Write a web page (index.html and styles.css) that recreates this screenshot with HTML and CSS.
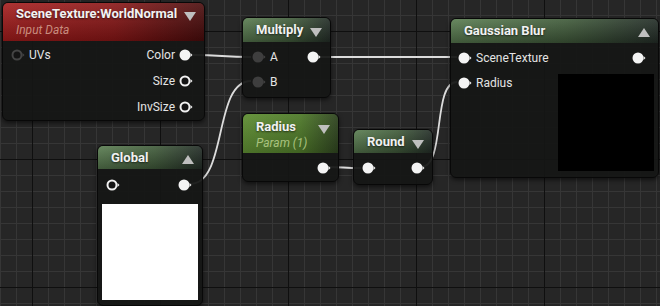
FILE: index.html
```html
<!DOCTYPE html>
<html>
<head>
  <title>Material Graph</title>
  <link rel="stylesheet" href="styles.css">
</head>
<body>
  <div class="graph">

    <!-- wires sit under the nodes -->
    <svg class="wires" width="660" height="306" viewBox="0 0 660 306">
      <path d="M193,55 C222,55 222,57 251,57" />
      <path d="M320,57 L457,57" />
      <path d="M190,184 C228,184 213,81 251,81" />
      <path d="M326,167 C343,167 343,168 361,168" />
      <path d="M421,167 C446,167 432,82 457,82" />
    </svg>

    <!-- SceneTexture -->
    <div class="node node--scene">
      <div class="node__head head--red">
        <div>
          <div class="node__title">SceneTexture:WorldNormal</div>
          <div class="node__sub sub--red">Input Data</div>
        </div>
        <span class="tri tri--down"></span>
      </div>
      <div class="node__body">
        <div class="row">
          <span class="pin"><svg width="14" height="12"><circle cx="6" cy="6" r="4.5" class="ring-dark"/><path d="M11.5,4 L13.5,6 L11.5,8 Z" class="tip-dark"/></svg>UVs</span>
          <span class="pin">Color<svg width="14" height="12"><circle cx="6" cy="6" r="5.5" class="fill"/><path d="M11.5,4 L13.5,6 L11.5,8 Z" class="tip"/></svg></span>
        </div>
        <div class="row row--end">
          <span class="pin">Size<svg width="14" height="12"><circle cx="6" cy="6" r="4.5" class="ring"/><path d="M11.5,4 L13.5,6 L11.5,8 Z" class="tip"/></svg></span>
        </div>
        <div class="row row--end">
          <span class="pin">InvSize<svg width="14" height="12"><circle cx="6" cy="6" r="4.5" class="ring"/><path d="M11.5,4 L13.5,6 L11.5,8 Z" class="tip"/></svg></span>
        </div>
      </div>
    </div>

    <!-- Multiply -->
    <div class="node node--multiply">
      <div class="node__head head--green">
        <div class="node__title">Multiply</div>
        <span class="tri tri--down"></span>
      </div>
      <div class="node__body body--small">
        <div class="row row--mid">
          <span class="pin"><svg width="14" height="12"><circle cx="6" cy="6" r="5.5" class="fill-dark"/><path d="M11.5,4 L13.5,6 L11.5,8 Z" class="tip-dark"/></svg>A</span>
          <span class="pin"><svg width="14" height="12"><circle cx="6" cy="6" r="5.5" class="fill"/><path d="M11.5,4 L13.5,6 L11.5,8 Z" class="tip"/></svg></span>
        </div>
        <div class="row row--mid">
          <span class="pin"><svg width="14" height="12"><circle cx="6" cy="6" r="5.5" class="fill-dark"/><path d="M11.5,4 L13.5,6 L11.5,8 Z" class="tip-dark"/></svg>B</span>
        </div>
      </div>
    </div>

    <!-- Gaussian Blur -->
    <div class="node node--blur">
      <div class="node__head head--green">
        <div class="node__title">Gaussian Blur</div>
        <span class="tri tri--up"></span>
      </div>
      <div class="blur__body">
        <div class="blur__inputs">
          <div class="row row--mid">
            <span class="pin"><svg width="14" height="12"><circle cx="6" cy="6" r="5.5" class="fill"/><path d="M11.5,4 L13.5,6 L11.5,8 Z" class="tip"/></svg>SceneTexture</span>
          </div>
          <div class="row row--mid">
            <span class="pin"><svg width="14" height="12"><circle cx="6" cy="6" r="5.5" class="fill"/><path d="M11.5,4 L13.5,6 L11.5,8 Z" class="tip"/></svg>Radius</span>
          </div>
        </div>
        <div class="blur__output">
          <div class="row row--mid row--end">
            <span class="pin"><svg width="14" height="12"><circle cx="6" cy="6" r="5.5" class="fill"/><path d="M11.5,4 L13.5,6 L11.5,8 Z" class="tip"/></svg></span>
          </div>
          <div class="preview preview--black"></div>
        </div>
      </div>
    </div>

    <!-- Global -->
    <div class="node node--global">
      <div class="node__head head--green">
        <div class="node__title">Global</div>
        <span class="tri tri--up"></span>
      </div>
      <div class="global__body">
        <div class="row row--pins">
          <span class="pin"><svg width="14" height="12"><circle cx="6" cy="6" r="4.5" class="ring"/><path d="M11.5,4 L13.5,6 L11.5,8 Z" class="tip"/></svg></span>
          <span class="pin"><svg width="14" height="12"><circle cx="6" cy="6" r="5.5" class="fill"/><path d="M11.5,4 L13.5,6 L11.5,8 Z" class="tip"/></svg></span>
        </div>
        <div class="preview preview--white"></div>
      </div>
    </div>

    <!-- Radius param -->
    <div class="node node--radius">
      <div class="node__head head--param">
        <div>
          <div class="node__title">Radius</div>
          <div class="node__sub sub--green">Param (1)</div>
        </div>
        <span class="tri tri--down"></span>
      </div>
      <div class="row row--single row--end">
        <span class="pin"><svg width="14" height="12"><circle cx="6" cy="6" r="5.5" class="fill"/><path d="M11.5,4 L13.5,6 L11.5,8 Z" class="tip"/></svg></span>
      </div>
    </div>

    <!-- Round -->
    <div class="node node--round">
      <div class="node__head head--green">
        <div class="node__title">Round</div>
        <span class="tri tri--down"></span>
      </div>
      <div class="row row--single">
        <span class="pin"><svg width="14" height="12"><circle cx="6" cy="6" r="5.5" class="fill"/><path d="M11.5,4 L13.5,6 L11.5,8 Z" class="tip"/></svg></span>
        <span class="pin"><svg width="14" height="12"><circle cx="6" cy="6" r="5.5" class="fill"/><path d="M11.5,4 L13.5,6 L11.5,8 Z" class="tip"/></svg></span>
      </div>
    </div>

  </div>
</body>
</html>
```

FILE: styles.css
```css
body {
  margin: 0;
  background: #262626;
  font-family: Roboto, 'Liberation Sans', sans-serif;
}

.graph {
  position: relative;
  width: 660px;
  height: 306px;
  overflow: hidden;
  background-color: #262626;
  background-image:
    linear-gradient(to right, #0f0f0f 1px, transparent 1px),
    linear-gradient(to bottom, #0f0f0f 1px, transparent 1px),
    linear-gradient(to right, #363636 1px, transparent 1px),
    linear-gradient(to bottom, #363636 1px, transparent 1px);
  background-size: 128px 128px, 128px 128px, 16px 16px, 16px 16px;
  background-position: 32px 0, 0 31px, 0 0, 0 15px;
}

.wires {
  position: absolute;
  left: 0;
  top: 0;
}

.wires path {
  fill: none;
  stroke: #dcdcdc;
  stroke-width: 1.8;
}

/* nodes */
.node {
  position: absolute;
  box-sizing: border-box;
  background: rgba(21, 22, 21, 0.94);
  border: 1px solid #080808;
  border-radius: 6px;
  box-shadow: 0 2px 4px rgba(0, 0, 0, 0.55);
  overflow: hidden;
  color: #e8e8e8;
}

.node--scene { left: 2px; top: 2px; width: 203px; height: 119px; }
.node--multiply { left: 242px; top: 17px; width: 89px; height: 81px; }
.node--blur { left: 450px; top: 18px; width: 209px; height: 160px; }
.node--global { left: 97px; top: 145px; width: 106px; height: 161px; }
.node--radius { left: 242px; top: 113px; width: 97px; height: 69px; }
.node--round { left: 353px; top: 129px; width: 80px; height: 56px; }

.node__head {
  display: flex;
  justify-content: space-between;
  align-items: flex-start;
  box-sizing: border-box;
  padding: 4px 8px 0 13px;
  height: 24px;
}

.node--scene .node__head { height: 38px; padding-top: 3px; }
.node--radius .node__head { height: 39px; padding-top: 5px; }
.node--blur .node__head { height: 24px; }
.node--global .node__head { height: 23px; }
.node--round .node__head { height: 23px; padding-left: 13px; }

.head--red {
  background:
    linear-gradient(to bottom, rgba(255, 255, 255, 0.1), rgba(0, 0, 0, 0.25)),
    linear-gradient(to right, #a51c1c, #8a1616 55%, #4a0c0c);
}

.head--green {
  background:
    linear-gradient(to bottom, rgba(255, 255, 255, 0.08), rgba(0, 0, 0, 0.3)),
    linear-gradient(to right, #5c7f53, #435e3d 55%, #26302a);
}

.head--param {
  background:
    linear-gradient(to bottom, rgba(255, 255, 255, 0.06), rgba(0, 0, 0, 0.2)),
    linear-gradient(to right, #5f8e33, #4f7a2a 60%, #2f4420);
}

.node__title {
  font-size: 13px;
  font-weight: bold;
  line-height: 16px;
  color: #f2f2f2;
  text-shadow: 0 1px 2px rgba(0, 0, 0, 0.6);
}

.node__sub {
  font-size: 12px;
  font-style: italic;
  line-height: 16px;
}

.sub--red { color: #c98d7f; }
.sub--green { color: #a9c27f; }

.tri {
  width: 0;
  height: 0;
  margin-top: 6px;
  border-left: 6px solid transparent;
  border-right: 6px solid transparent;
}

.tri--down { border-top: 9px solid #bfbfbf; }
.tri--up { border-bottom: 9px solid #bfbfbf; margin-top: 5px; }

/* pins */
.node__body {
  padding-top: 1px;
}

.row {
  display: flex;
  justify-content: space-between;
  align-items: center;
  height: 26px;
  padding: 0 8px 0 8px;
  font-size: 12px;
  color: #e4e4e4;
}

.row--end { justify-content: flex-end; }
.row--mid { height: 25px; }

.body--small { padding-top: 2px; }

.pin {
  display: flex;
  align-items: center;
  gap: 4px;
}

.pin svg { display: block; }

.fill { fill: #f4f4f4; }
.fill-dark { fill: #3e3e3e; }
.ring { fill: #141414; stroke: #f0f0f0; stroke-width: 2; }
.ring-dark { fill: #141414; stroke: #444; stroke-width: 2; }
.tip { fill: #f0f0f0; }
.tip-dark { fill: #444; }

.node--scene .row { padding: 0 11px 0 8px; }
.node--multiply .row { padding: 0 9px 0 9px; }

/* gaussian blur */
.blur__body {
  display: flex;
  justify-content: space-between;
  padding-top: 2px;
}

.blur__inputs .row { padding-left: 7px; }

.blur__output {
  display: flex;
  flex-direction: column;
  align-items: flex-end;
  padding-right: 4px;
}

.blur__output .row { height: 25px; padding: 0 8px 0 0; margin-top: 0; }

.preview {
  width: 96px;
  height: 97px;
}

.preview--black { background: #000; margin-top: 4px; }
.preview--white { background: #fff; margin: 0 auto; }

/* global */
.row--pins {
  height: 32px;
  padding: 0 10px 0 8px;
}

.global__body .preview { height: 96px; margin-top: 3px; margin-left: 4px; }

/* single-row nodes */
.row--single {
  height: 30px;
  padding: 0 7px 0 8px;
}
```
